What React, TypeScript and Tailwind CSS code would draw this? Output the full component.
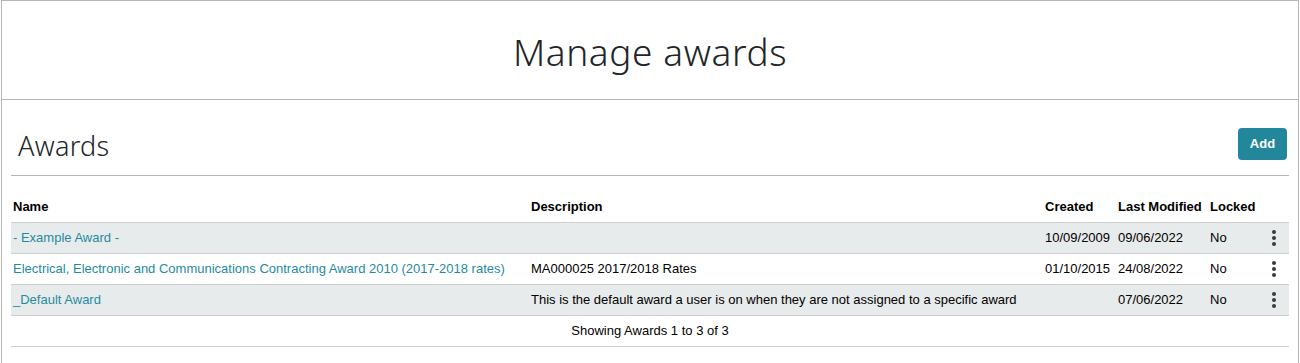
type Award = {
  name: string;
  description: string;
  created: string;
  modified: string;
  locked: string;
};

const awards: Award[] = [
  { name: "- Example Award -", description: "", created: "10/09/2009", modified: "09/06/2022", locked: "No" },
  {
    name: "Electrical, Electronic and Communications Contracting Award 2010 (2017-2018 rates)",
    description: "MA000025 2017/2018 Rates",
    created: "01/10/2015",
    modified: "24/08/2022",
    locked: "No",
  },
  {
    name: "_Default Award",
    description: "This is the default award a user is on when they are not assigned to a specific award",
    created: "",
    modified: "07/06/2022",
    locked: "No",
  },
];

function Kebab() {
  return (
    <svg width="6" height="18" viewBox="0 0 6 18" className="ml-[6px]" fill="#3a3a3a">
      <circle cx="3" cy="3" r="2" />
      <circle cx="3" cy="9" r="2" />
      <circle cx="3" cy="15" r="2" />
    </svg>
  );
}

export default function App() {
  return (
    <div className="h-[363px] overflow-hidden bg-white font-['Liberation_Sans',Arial,sans-serif] text-black">
      <div className="mx-px h-[400px] border border-[#b5b5b5]">
        <header className="flex h-[99px] items-center justify-center border-b border-[#b5b5b5] pt-[3px]">
          <h1 className="font-['Noto_Sans',sans-serif] text-[37px] font-light tracking-[0.6px] text-[#212529]">
            Manage awards
          </h1>
        </header>

        <div className="px-[9px]">
          <div className="flex h-[76px] items-end justify-between border-b border-[#b5b5b5] pb-[14px] pl-[7px] pr-[2px]">
            <h2 className="mb-[2px] font-['Noto_Sans',sans-serif] text-[27px] font-light leading-none tracking-[0.3px] text-[#212529]">
              Awards
            </h2>
            <button
              type="button"
              className="mb-[1px] h-[32px] w-[49px] rounded-[4px] bg-[#22879a] text-[13px] font-bold text-white"
            >
              Add
            </button>
          </div>

          <table className="w-full border-collapse text-[13px]">
            <thead>
              <tr className="h-[46px] border-b border-[#cfcfcf] text-left align-bottom">
                <th className="w-[520px] pb-[5px] pl-[2px] font-bold">Name</th>
                <th className="w-[514px] pb-[5px] font-bold">Description</th>
                <th className="w-[73px] pb-[5px] font-bold">Created</th>
                <th className="w-[92px] pb-[5px] font-bold">Last Modified</th>
                <th className="pb-[5px] font-bold">Locked</th>
                <th className="w-[24px]" />
              </tr>
            </thead>
            <tbody>
              {awards.map((a, i) => (
                <tr
                  key={a.name}
                  className={`h-[31px] border-b border-[#cfcfcf] ${i % 2 === 0 ? "bg-[#e8ebeb]" : "bg-white"}`}
                >
                  <td className="pl-[2px] text-[#1f8ba0]">{a.name}</td>
                  <td>{a.description}</td>
                  <td>{a.created}</td>
                  <td>{a.modified}</td>
                  <td>{a.locked}</td>
                  <td>
                    <Kebab />
                  </td>
                </tr>
              ))}
              <tr className="h-[31px] border-b border-[#cfcfcf]">
                <td colSpan={6} className="text-center">
                  Showing Awards 1 to 3 of 3
                </td>
              </tr>
            </tbody>
          </table>
        </div>
      </div>
    </div>
  );
}
